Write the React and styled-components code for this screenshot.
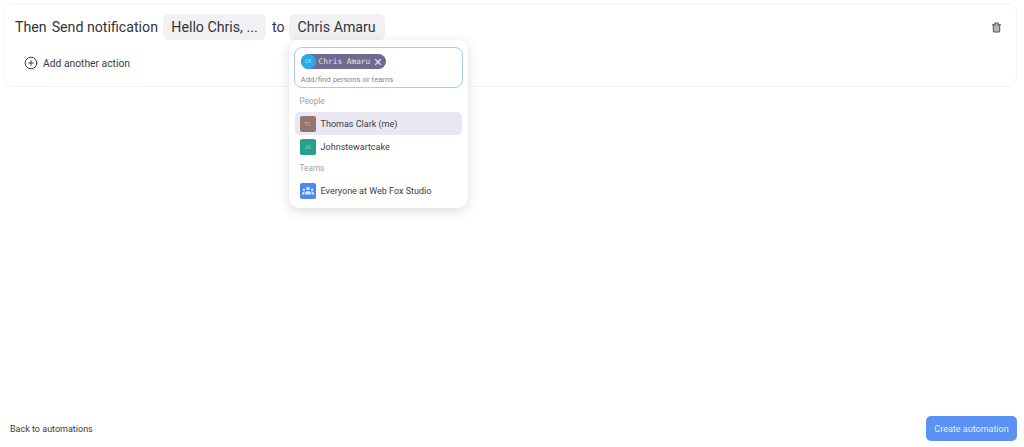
import { useState } from "react";
import styled, { createGlobalStyle } from "styled-components";
import { Trash2, X, CirclePlus } from "lucide-react";

const GlobalStyle = createGlobalStyle`
  html, body {
    margin: 0;
    padding: 0;
    background: #fff;
    font-family: Roboto, "Liberation Sans", sans-serif;
    overflow: hidden;
  }
  * { box-sizing: border-box; }
`;

const Page = styled.main`
  height: 447px;
  display: flex;
  flex-direction: column;
  justify-content: space-between;
  padding: 3px 7px 6px 3px;
`;

const ActionCard = styled.section`
  height: 84px;
  border: 1px solid #f4f4f6;
  border-radius: 10px;
  padding: 10px 11px 0 11px;
`;

const SentenceRow = styled.div`
  display: flex;
  align-items: center;
  height: 26px;
  font-size: 14.2px;
  color: #33343a;
`;

const Word = styled.span`
  margin-right: ${(p) => p.$gap || 5}px;
  white-space: nowrap;
`;

const PillWrap = styled.div`
  position: relative;
  margin-right: 6px;
`;

const Pill = styled.button`
  display: block;
  height: 26px;
  width: ${(p) => p.$width}px;
  border: 0;
  border-radius: 6px;
  padding: 0;
  background: #f1f1f4;
  color: #33343a;
  font: inherit;
  text-align: center;
`;

const TrashButton = styled.span`
  margin-left: auto;
  margin-right: 3px;
  display: flex;
  color: #55565c;
`;

const AddAction = styled.div`
  display: flex;
  align-items: center;
  gap: 5px;
  margin: 11px 0 0 9px;
  height: 24px;
  font-size: 10.3px;
  color: #3a3b41;
`;

const Popover = styled.div`
  position: absolute;
  top: 26px;
  left: 0;
  width: 179px;
  height: 168px;
  padding: 7px 5px;
  border-radius: 10px;
  background: #fff;
  box-shadow: 0 3px 12px rgba(40, 40, 70, 0.16);
  z-index: 2;
`;

const PersonInput = styled.div`
  display: flex;
  flex-direction: column;
  align-items: flex-start;
  height: 41px;
  border: 1px solid #a6cdeb;
  border-radius: 8px;
  padding: 6px 6px 0;
`;

const Chip = styled.div`
  display: flex;
  align-items: center;
  width: 85px;
  height: 15px;
  border-radius: 8px;
  background: #6f6a90;
  color: #e4e4ee;
  font-family: "DejaVu Sans Mono", monospace;
  font-size: 7.8px;
`;

const ChipAvatar = styled.span`
  width: 15px;
  height: 15px;
  margin-right: 3px;
  border-radius: 50%;
  background: #2aa9e8;
  color: #b9e4f8;
  font-family: Roboto, sans-serif;
  font-size: 5px;
  line-height: 15px;
  text-align: center;
`;

const ChipName = styled.span`
  white-space: nowrap;
`;

const ChipClose = styled.span`
  display: flex;
  margin-left: 3px;
  color: #e6e6ee;
`;

const Hint = styled.div`
  margin-top: 5px;
  font-size: 7.8px;
  line-height: 11px;
  color: #85868c;
`;

const SectionLabel = styled.div`
  height: ${(p) => (p.$tight ? 21 : 24)}px;
  padding: ${(p) => (p.$tight ? 5 : 8)}px 0 0 6px;
  font-size: 8.2px;
  line-height: 11px;
  color: #9c9da3;
`;

const OptionRow = styled.div`
  display: flex;
  align-items: center;
  gap: 5px;
  height: 23px;
  margin: 0 1px;
  padding-left: 5px;
  border-radius: 5px;
  background: ${(p) => (p.$active ? "#e9e8f2" : "transparent")};
  font-size: 9px;
  color: #3c3d43;
`;

const SquareAvatar = styled.span`
  display: flex;
  align-items: center;
  justify-content: center;
  width: 16px;
  height: 16px;
  border-radius: 2px;
  background: ${(p) => p.$color};
  color: rgba(255, 255, 255, 0.55);
  font-size: 5px;
`;

const Footer = styled.footer`
  display: flex;
  align-items: center;
  justify-content: space-between;
  padding-left: 7px;
`;

const BackLink = styled.a`
  font-size: 9px;
  color: #3a3b41;
`;

const CreateButton = styled.button`
  width: 91px;
  height: 25px;
  border: 0;
  border-radius: 5px;
  background: #5b92f5;
  color: #e4edfd;
  font-family: inherit;
  font-size: 9px;
`;

function TeamIcon() {
  return (
    <svg width="12" height="9" viewBox="0 0 12 9" fill="#dfe9fd">
      <circle cx="6" cy="2.4" r="1.7" />
      <path d="M3 8.5c0-2 1.2-3.4 3-3.4s3 1.4 3 3.4z" />
      <circle cx="1.9" cy="3.6" r="1.2" />
      <path d="M0 8.5c0-1.6.8-3 1.9-3 .4 0 .7.1 1 .3-.5.7-.7 1.6-.7 2.7z" />
      <circle cx="10.1" cy="3.6" r="1.2" />
      <path d="M12 8.5c0-1.6-.8-3-1.9-3-.4 0-.7.1-1 .3.5.7.7 1.6.7 2.7z" />
    </svg>
  );
}

const PEOPLE = [
  { id: "tc", initials: "TC", name: "Thomas Clark (me)", color: "#94766c", active: true },
  { id: "jo", initials: "JO", name: "Johnstewartcake", color: "#24a08b" },
];

export default function App() {
  const [recipient] = useState("Chris Amaru");

  return (
    <Page>
      <GlobalStyle />
      <ActionCard>
        <SentenceRow>
          <Word>Then</Word>
          <Word>Send notification</Word>
          <PillWrap>
            <Pill $width={103}>Hello Chris, ...</Pill>
          </PillWrap>
          <Word $gap={4}>to</Word>
          <PillWrap>
            <Pill $width={96}>{recipient}</Pill>
            <Popover>
              <PersonInput>
                <Chip>
                  <ChipAvatar>CK</ChipAvatar>
                  <ChipName>{recipient}</ChipName>
                  <ChipClose>
                    <X size={10} strokeWidth={2.6} />
                  </ChipClose>
                </Chip>
                <Hint>Add/find persons or teams</Hint>
              </PersonInput>
              <SectionLabel>People</SectionLabel>
              {PEOPLE.map((p) => (
                <OptionRow key={p.id} $active={p.active}>
                  <SquareAvatar $color={p.color}>{p.initials}</SquareAvatar>
                  {p.name}
                </OptionRow>
              ))}
              <SectionLabel $tight>Teams</SectionLabel>
              <OptionRow>
                <SquareAvatar $color="#4f87ee">
                  <TeamIcon />
                </SquareAvatar>
                Everyone at Web Fox Studio
              </OptionRow>
            </Popover>
          </PillWrap>
          <TrashButton>
            <Trash2 size={11} strokeWidth={2.2} fill="#b4b5ba" />
          </TrashButton>
        </SentenceRow>
        <AddAction>
          <CirclePlus size={14} strokeWidth={1.7} />
          Add another action
        </AddAction>
      </ActionCard>
      <Footer>
        <BackLink>Back to automations</BackLink>
        <CreateButton>Create automation</CreateButton>
      </Footer>
    </Page>
  );
}
